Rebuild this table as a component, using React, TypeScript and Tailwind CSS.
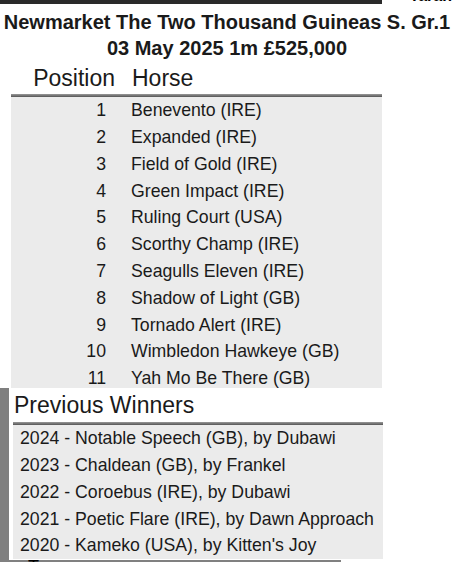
const runners = [
  'Benevento (IRE)',
  'Expanded (IRE)',
  'Field of Gold (IRE)',
  'Green Impact (IRE)',
  'Ruling Court (USA)',
  'Scorthy Champ (IRE)',
  'Seagulls Eleven (IRE)',
  'Shadow of Light (GB)',
  'Tornado Alert (IRE)',
  'Wimbledon Hawkeye (GB)',
  'Yah Mo Be There (GB)',
];

const winners = [
  '2024 - Notable Speech (GB), by Dubawi',
  '2023 - Chaldean (GB), by Frankel',
  '2022 - Coroebus (IRE), by Dubawi',
  '2021 - Poetic Flare (IRE), by Dawn Approach',
  '2020 - Kameko (USA), by Kitten\'s Joy',
];

export default function App() {
  return (
    <div
      className="relative w-[454px] h-[562px] overflow-hidden bg-white text-[#1a1a1a]"
      style={{ fontFamily: '"Liberation Sans", Arial, sans-serif' }}
    >
      {/* page behind the popup */}
      <div className="h-[4px] w-[382px] bg-[#2a2a2a]" />
      <div className="absolute right-[2px] top-[-12px] text-[16px] font-bold leading-[16px] text-black">
        Taran
      </div>

      <div className="pt-[5px] text-center text-[20px] font-bold leading-[26px]">
        <div>Newmarket The Two Thousand Guineas S. Gr.1</div>
        <div>03 May 2025 1m £525,000</div>
      </div>

      <div className="ml-[11px] mt-[1px] w-[371px]">
        <div className="flex h-[32px] items-center text-[23px] leading-none">
          <div className="w-[104px] text-right">Position</div>
          <div className="pl-[17px]">Horse</div>
        </div>
        <div className="h-[3px] bg-gradient-to-b from-[#9a9a9a] to-[#555]" />
        <div className="h-[291px] overflow-hidden bg-[#ebebeb] text-[17.7px]">
          {runners.map((name, i) => (
            <div key={name} className="flex h-[26.8px] items-center">
              <div className="w-[95px] text-right">{i + 1}</div>
              <div className="pl-[25px]">{name}</div>
            </div>
          ))}
        </div>
      </div>

      {/* previous winners popup */}
      <div className="absolute left-0 top-[388px] flex h-[172px] w-[383px] bg-white">
        <div className="w-[9px] bg-[#7f7f7f]" />
        <div className="flex-1 pl-[4px] pt-[1px]">
          <div className="h-[33px] pl-[1px] text-[23px] leading-[33px]">Previous Winners</div>
          <div className="h-[3px] bg-gradient-to-b from-[#9a9a9a] to-[#555]" />
          <div className="bg-[#ebebeb] text-[17.7px]">
            {winners.map((w) => (
              <div key={w} className="flex h-[26.8px] items-center pl-[7px]">
                {w}
              </div>
            ))}
          </div>
        </div>
      </div>
      <div className="absolute left-0 top-[560px] h-[2px] w-[341px] bg-[#808080]" />
      <div className="absolute left-[28px] top-[558px] text-[18px] leading-[18px] text-black">
        Taran
      </div>
    </div>
  );
}
